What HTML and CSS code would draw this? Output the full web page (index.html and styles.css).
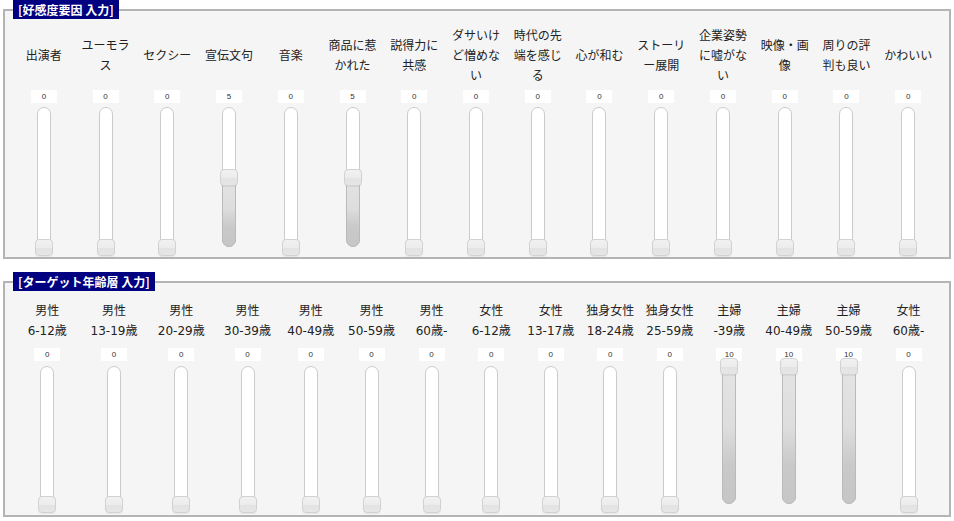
FILE: index.html
```html
<!DOCTYPE html>
<html lang="ja">
<head>
<meta charset="utf-8">
<title>入力</title>
<link rel="stylesheet" href="styles.css">
</head>
<body>
<fieldset class="panel panel-a">
  <legend class="tag">[好感度要因 入力]</legend>
  <div class="cols cols-a">
    <div class="col"><div class="lbl">出演者</div><div class="num">0</div><div class="slider" style="--v:0"><div class="track"></div><div class="thumb"></div></div></div>
    <div class="col"><div class="lbl">ユーモラ<br>ス</div><div class="num">0</div><div class="slider" style="--v:0"><div class="track"></div><div class="thumb"></div></div></div>
    <div class="col"><div class="lbl">セクシー</div><div class="num">0</div><div class="slider" style="--v:0"><div class="track"></div><div class="thumb"></div></div></div>
    <div class="col"><div class="lbl">宣伝文句</div><div class="num">5</div><div class="slider" style="--v:5"><div class="track"><div class="fill"></div></div><div class="thumb"></div></div></div>
    <div class="col"><div class="lbl">音楽</div><div class="num">0</div><div class="slider" style="--v:0"><div class="track"></div><div class="thumb"></div></div></div>
    <div class="col"><div class="lbl">商品に惹<br>かれた</div><div class="num">5</div><div class="slider" style="--v:5"><div class="track"><div class="fill"></div></div><div class="thumb"></div></div></div>
    <div class="col"><div class="lbl">説得力に<br>共感</div><div class="num">0</div><div class="slider" style="--v:0"><div class="track"></div><div class="thumb"></div></div></div>
    <div class="col"><div class="lbl">ダサいけ<br>ど憎めな<br>い</div><div class="num">0</div><div class="slider" style="--v:0"><div class="track"></div><div class="thumb"></div></div></div>
    <div class="col"><div class="lbl">時代の先<br>端を感じ<br>る</div><div class="num">0</div><div class="slider" style="--v:0"><div class="track"></div><div class="thumb"></div></div></div>
    <div class="col"><div class="lbl">心が和む</div><div class="num">0</div><div class="slider" style="--v:0"><div class="track"></div><div class="thumb"></div></div></div>
    <div class="col"><div class="lbl">ストーリ<br>ー展開</div><div class="num">0</div><div class="slider" style="--v:0"><div class="track"></div><div class="thumb"></div></div></div>
    <div class="col"><div class="lbl">企業姿勢<br>に嘘がな<br>い</div><div class="num">0</div><div class="slider" style="--v:0"><div class="track"></div><div class="thumb"></div></div></div>
    <div class="col"><div class="lbl">映像・画<br>像</div><div class="num">0</div><div class="slider" style="--v:0"><div class="track"></div><div class="thumb"></div></div></div>
    <div class="col"><div class="lbl">周りの評<br>判も良い</div><div class="num">0</div><div class="slider" style="--v:0"><div class="track"></div><div class="thumb"></div></div></div>
    <div class="col"><div class="lbl">かわいい</div><div class="num">0</div><div class="slider" style="--v:0"><div class="track"></div><div class="thumb"></div></div></div>
  </div>
</fieldset>

<fieldset class="panel panel-b">
  <legend class="tag">[ターゲット年齢層 入力]</legend>
  <div class="cols cols-b">
    <div class="col"><div class="lbl">男性<br>6-12歳</div><div class="num">0</div><div class="slider" style="--v:0"><div class="track"></div><div class="thumb"></div></div></div>
    <div class="col"><div class="lbl">男性<br>13-19歳</div><div class="num">0</div><div class="slider" style="--v:0"><div class="track"></div><div class="thumb"></div></div></div>
    <div class="col"><div class="lbl">男性<br>20-29歳</div><div class="num">0</div><div class="slider" style="--v:0"><div class="track"></div><div class="thumb"></div></div></div>
    <div class="col"><div class="lbl">男性<br>30-39歳</div><div class="num">0</div><div class="slider" style="--v:0"><div class="track"></div><div class="thumb"></div></div></div>
    <div class="col"><div class="lbl">男性<br>40-49歳</div><div class="num">0</div><div class="slider" style="--v:0"><div class="track"></div><div class="thumb"></div></div></div>
    <div class="col"><div class="lbl">男性<br>50-59歳</div><div class="num">0</div><div class="slider" style="--v:0"><div class="track"></div><div class="thumb"></div></div></div>
    <div class="col"><div class="lbl">男性<br>60歳-</div><div class="num">0</div><div class="slider" style="--v:0"><div class="track"></div><div class="thumb"></div></div></div>
    <div class="col"><div class="lbl">女性<br>6-12歳</div><div class="num">0</div><div class="slider" style="--v:0"><div class="track"></div><div class="thumb"></div></div></div>
    <div class="col"><div class="lbl">女性<br>13-17歳</div><div class="num">0</div><div class="slider" style="--v:0"><div class="track"></div><div class="thumb"></div></div></div>
    <div class="col"><div class="lbl">独身女性<br>18-24歳</div><div class="num">0</div><div class="slider" style="--v:0"><div class="track"></div><div class="thumb"></div></div></div>
    <div class="col"><div class="lbl">独身女性<br>25-59歳</div><div class="num">0</div><div class="slider" style="--v:0"><div class="track"></div><div class="thumb"></div></div></div>
    <div class="col"><div class="lbl">主婦<br>-39歳</div><div class="num">10</div><div class="slider" style="--v:10"><div class="track"><div class="fill"></div></div><div class="thumb"></div></div></div>
    <div class="col"><div class="lbl">主婦<br>40-49歳</div><div class="num">10</div><div class="slider" style="--v:10"><div class="track"><div class="fill"></div></div><div class="thumb"></div></div></div>
    <div class="col"><div class="lbl">主婦<br>50-59歳</div><div class="num">10</div><div class="slider" style="--v:10"><div class="track"><div class="fill"></div></div><div class="thumb"></div></div></div>
    <div class="col"><div class="lbl">女性<br>60歳-</div><div class="num">0</div><div class="slider" style="--v:0"><div class="track"></div><div class="thumb"></div></div></div>
  </div>
</fieldset>
</body>
</html>
```

FILE: styles.css
```css
html, body {
  margin: 0;
  background: #ffffff;
}

body {
  padding: 0 3px;
  font-family: "Noto Sans CJK JP", "Noto Sans", sans-serif;
  color: #222222;
}

.panel {
  margin: 0;
  border: 2px solid #b4b4b4;
  background: #f5f5f5;
  padding: 0 10px 10px 8px;
  min-width: 0;
}

.panel-a {
  --len: 140px;
  padding-top: 7px;
}

.panel-b {
  --len: 138px;
  margin-top: 13px;
  padding-top: 10px;
  padding-bottom: 11px;
}

.tag {
  background: #000080;
  color: #ffffff;
  font-size: 12px;
  font-weight: bold;
  line-height: 19px;
  padding: 0 5px;
  margin: 0;
}

.cols {
  display: grid;
}

.cols-a {
  grid-template-columns: repeat(15, 1fr);
}

.cols-b {
  margin-left: 1px;
  grid-template-columns: 66.5px 67px 67.5px 65px 61.5px 60px 60px 59.5px 59.5px 59.5px 59.5px 59.5px 59.5px 60px 60px;
}

.col {
  display: flex;
  flex-direction: column;
  align-items: center;
  min-width: 0;
}

.lbl {
  display: flex;
  align-items: center;
  justify-content: center;
  text-align: center;
  font-family: "DejaVu Sans", "Noto Sans CJK JP", sans-serif;
  font-size: 12px;
  line-height: 20px;
  white-space: nowrap;
}

.panel-a .lbl {
  height: 60px;
}

.panel-b .lbl {
  height: 40px;
}

.num {
  width: 26px;
  height: 13px;
  background: #ffffff;
  font-family: "Liberation Sans", sans-serif;
  font-size: 8px;
  line-height: 13px;
  text-align: center;
  color: #333333;
}

.panel-a .num {
  margin-top: 4px;
}

.panel-b .num {
  margin-top: 7px;
}

.slider {
  position: relative;
  width: 20px;
  height: var(--len);
}

.panel-a .slider {
  margin-top: 4px;
}

.panel-b .slider {
  margin-top: 5px;
}

.track {
  position: relative;
  box-sizing: border-box;
  width: 14px;
  height: 100%;
  margin: 0 auto;
  border: 1px solid #cbcbcb;
  border-radius: 7px;
  background: #ffffff;
}

.fill {
  position: absolute;
  left: -1px;
  right: -1px;
  bottom: -1px;
  box-sizing: border-box;
  height: calc(var(--v) / 10 * var(--len));
  border: 1px solid #bababa;
  border-radius: 7px;
  background: linear-gradient(to bottom, #e4e4e4 0%, #dddddd 45%, #c9c9c9 72%, #c6c6c6 100%);
}

.thumb {
  position: absolute;
  left: 1px;
  top: calc((1 - var(--v) / 10) * var(--len) - 8px);
  box-sizing: border-box;
  width: 18px;
  height: 17px;
  border: 1px solid #d2d2d2;
  border-radius: 4px;
  background: linear-gradient(to bottom, #f1f1f1 0%, #ececec 50%, #e3e3e3 56%, #e6e6e6 100%);
  box-shadow: 0 1px 1px rgba(0, 0, 0, 0.06);
  z-index: 2;
}
```
